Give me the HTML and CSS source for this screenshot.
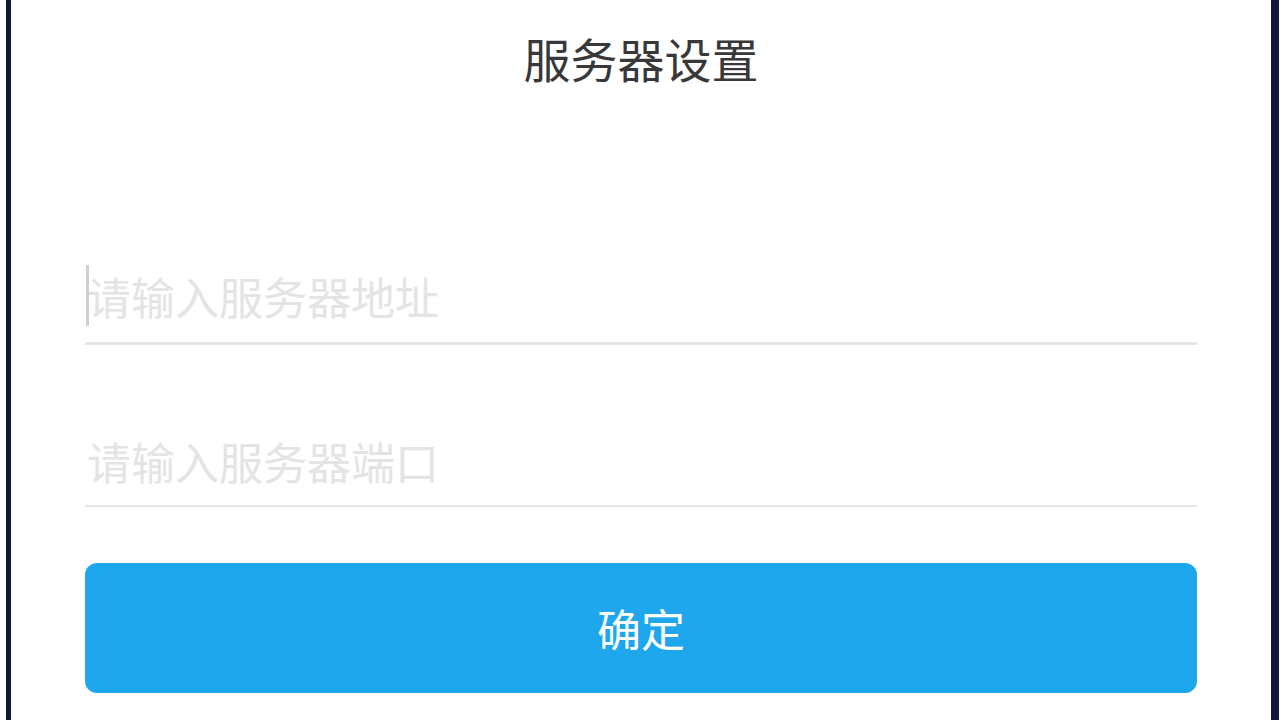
FILE: index.html
```html
<!DOCTYPE html>
<html lang="zh-CN">
<head>
<meta charset="utf-8">
<title>服务器设置</title>
<link rel="stylesheet" href="styles.css">
</head>
<body>
<div class="screen">
  <h1 class="title">服务器设置</h1>
  <form class="form">
    <div class="field field-first">
      <span class="caret"></span>
      <input class="input" type="text" placeholder="请输入服务器地址">
    </div>
    <div class="field field-second">
      <input class="input" type="text" placeholder="请输入服务器端口">
    </div>
    <button class="submit" type="button">确定</button>
  </form>
</div>
</body>
</html>
```
FILE: styles.css
```css
html, body {
  margin: 0;
  padding: 0;
  background: #ffffff;
}
body {
  width: 1280px;
  height: 720px;
  overflow: hidden;
  font-family: "Noto Sans CJK SC", "Noto Sans", sans-serif;
}
.screen {
  margin-left: 6px;
  width: 1273px;
  height: 720px;
  box-sizing: border-box;
  border-left: 5px solid #15173a;
  border-right: 8px solid #15173a;
  background: #ffffff;
  display: flex;
  flex-direction: column;
}
.title {
  margin: 34px 0 0 0;
  height: 48px;
  font-size: 47px;
  line-height: 48px;
  font-weight: 400;
  color: #383838;
  text-align: center;
}
.form {
  display: flex;
  flex-direction: column;
  padding: 0 74px;
  margin: 0;
}
.field {
  position: relative;
  display: flex;
}
.field-first {
  margin-top: 186px;
  padding-bottom: 18px;
  border-bottom: 3px solid #e6e6e6;
}
.field-second {
  margin-top: 88px;
  padding-bottom: 16px;
  border-bottom: 2px solid #e6e6e6;
}
.input {
  flex: 1;
  height: 56px;
  border: none;
  outline: none;
  padding: 0 0 0 2px;
  margin: 0;
  font-family: "Noto Sans CJK SC", "Noto Sans", sans-serif;
  font-size: 44px;
  line-height: 56px;
  color: #333333;
  background: transparent;
}
.input::placeholder {
  color: #e4e4e4;
}
.caret {
  position: absolute;
  left: 1px;
  top: -3px;
  width: 3px;
  height: 61px;
  background: #d0d0d0;
}
.submit {
  margin-top: 56px;
  height: 130px;
  border: none;
  border-radius: 12px;
  background: #1ea7ec;
  color: #ffffff;
  font-family: "Noto Sans CJK SC", "Noto Sans", sans-serif;
  font-size: 44px;
  line-height: 130px;
  padding: 0;
}
```
